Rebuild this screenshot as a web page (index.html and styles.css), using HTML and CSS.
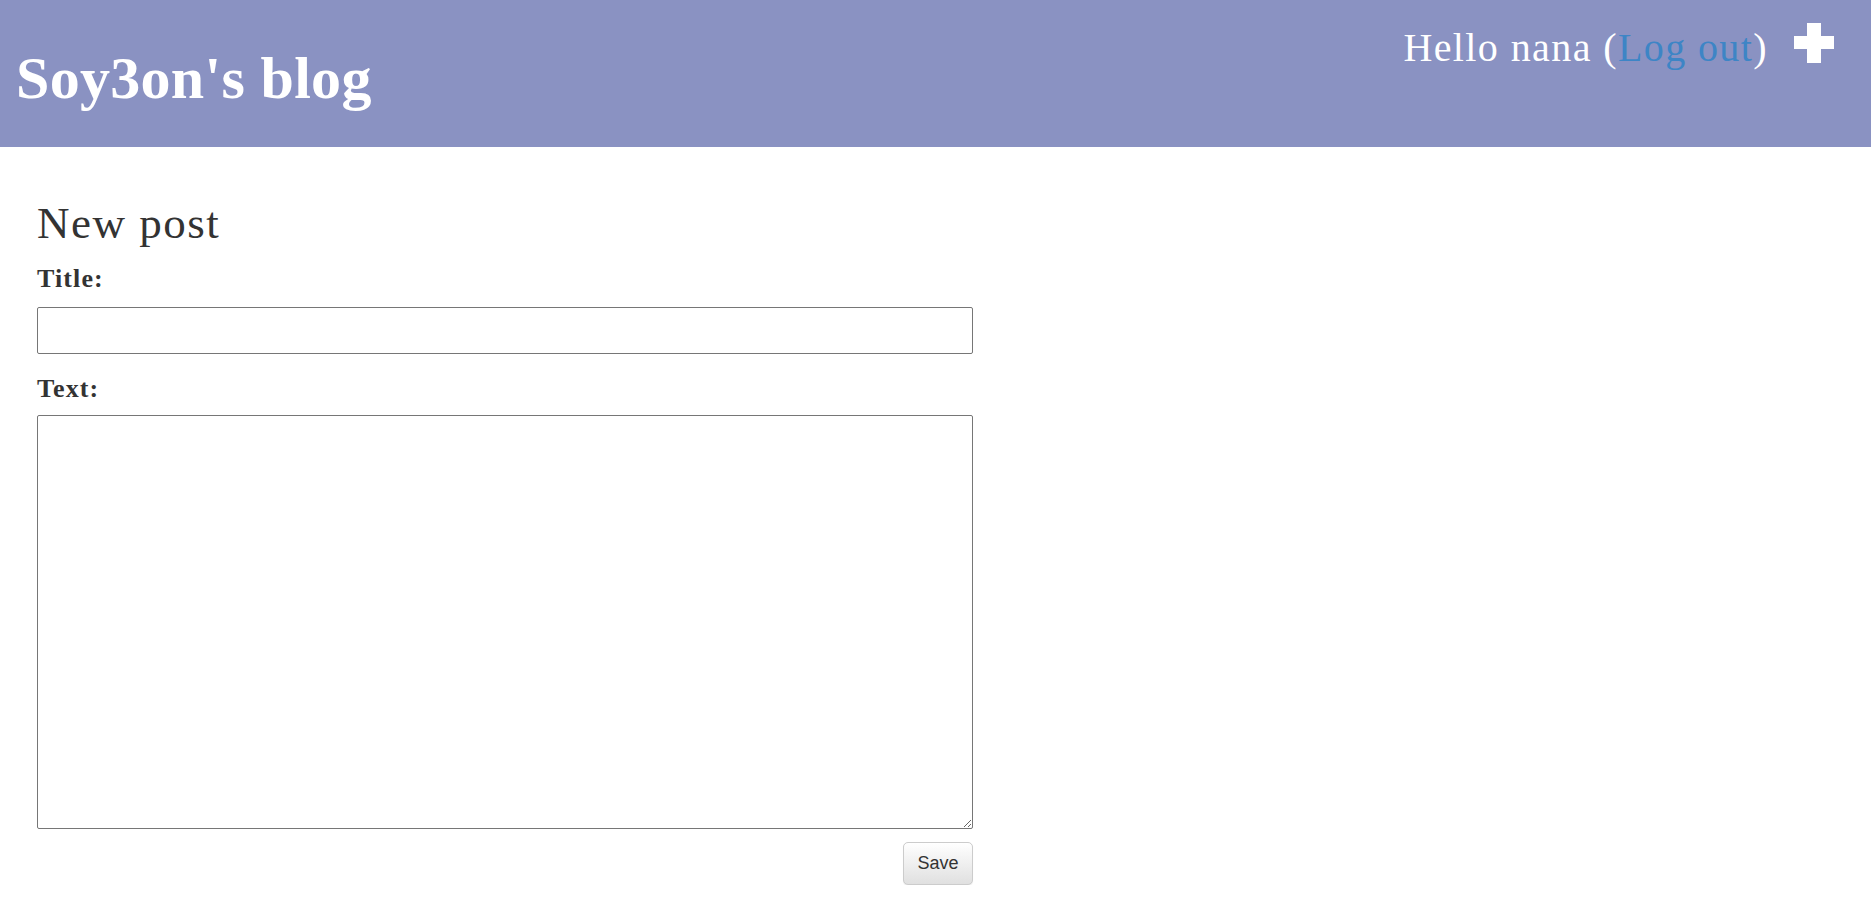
FILE: index.html
```html
<!DOCTYPE html>
<html lang="en">
<head>
    <meta charset="UTF-8">
    <title>Soy3on's blog</title>
    <link rel="stylesheet" href="styles.css">
</head>
<body>

    <div class="page-header">
        <h1><a href="/">Soy3on's blog</a></h1>
        <div class="top-menu">
            <p class="hello">Hello nana (<a href="/accounts/logout/">Log out</a>)</p>
            <a href="/post/new/" class="plus-link" title="New post">
                <svg class="plus-icon" viewBox="0 0 40 40" width="40" height="40">
                    <rect x="13" y="0" width="14" height="40" fill="#fff"/>
                    <rect x="0" y="13" width="40" height="13" fill="#fff"/>
                </svg>
            </a>
        </div>
    </div>

    <div class="content">
        <h2>New post</h2>
        <form class="post-form" method="POST">
            <label for="id_title">Title:</label>
            <input type="text" id="id_title" name="title">

            <label for="id_text">Text:</label>
            <textarea id="id_text" name="text"></textarea>

            <div class="form-actions">
                <button type="submit" class="save btn-default">Save</button>
            </div>
        </form>
    </div>

</body>
</html>
```

FILE: styles.css
```css
body {
    margin: 0;
    padding: 0;
    font-family: "Liberation Serif", "Times New Roman", serif;
    color: #333;
    background: #fff;
}

a {
    color: #3d85c6;
    text-decoration: none;
}

.page-header {
    display: flex;
    justify-content: space-between;
    align-items: flex-start;
    height: 147px;
    box-sizing: border-box;
    background-color: #8a92c2;
    padding: 0 37px 0 16px;
}

.page-header h1 {
    margin: 48px 0 0;
    font-size: 60px;
    line-height: 60px;
    font-weight: bold;
    letter-spacing: 0.3px;
}

.page-header h1 a {
    color: #fff;
}

.top-menu {
    display: flex;
    align-items: flex-start;
    gap: 26px;
}

.hello {
    margin: 28px 0 0;
    color: #fff;
    font-size: 40px;
    line-height: 40px;
    letter-spacing: 1.4px;
}

.plus-link {
    display: block;
    margin-top: 23px;
}

.plus-icon {
    display: block;
}

.content {
    padding: 0 37px;
}

h2 {
    margin: 54px 0 0;
    font-size: 45px;
    line-height: 45px;
    font-weight: normal;
    letter-spacing: 1.5px;
}

.post-form {
    width: 936px;
}

.post-form label {
    display: block;
    margin-top: 20px;
    font-size: 26px;
    line-height: 26px;
    font-weight: bold;
    letter-spacing: 1.1px;
}

.post-form label[for="id_text"] {
    margin-top: 22px;
}

.post-form input,
.post-form textarea {
    display: block;
    width: 100%;
    box-sizing: border-box;
    border: 1px solid #767676;
    border-radius: 2px;
    background: #fff;
    margin: 0;
}

.post-form input {
    height: 47px;
    margin-top: 15px;
}

.post-form textarea {
    height: 414px;
    margin-top: 13px;
}

.form-actions {
    display: flex;
    justify-content: flex-end;
    margin-top: 13px;
}

.btn-default {
    width: 70px;
    height: 43px;
    padding: 0;
    font-family: "Liberation Sans", Arial, sans-serif;
    font-size: 18px;
    color: #333;
    background-image: linear-gradient(to bottom, #fff 0%, #e0e0e0 100%);
    border: 1px solid #ccc;
    border-radius: 5px;
    box-shadow: inset 0 1px 0 rgba(255, 255, 255, 0.15), 0 1px 1px rgba(0, 0, 0, 0.075);
    cursor: pointer;
}
```
